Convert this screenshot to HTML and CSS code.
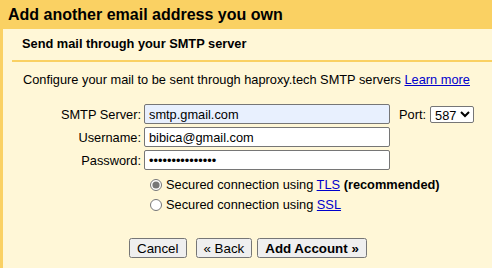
FILE: index.html
```html
<!DOCTYPE html>
<html lang="en">
<head>
  <meta charset="UTF-8" />
  <title>Add another email address you own</title>
  <link rel="stylesheet" href="styles.css">
</head>
<body>
  <div class="title-bar">Add another email address you own</div>

  <div class="panel">
    <div class="step-title">Send mail through your SMTP server</div>
    <div class="divider"></div>

    <p class="intro">Configure your mail to be sent through haproxy.tech SMTP servers <a href="#">Learn more</a></p>

    <form class="smtp-form">
      <div class="form-row">
        <label for="smtpServer">SMTP Server:</label>
        <input type="text" id="smtpServer" class="autofill" value="smtp.gmail.com">
        <label for="port" class="port-label">Port:</label>
        <select id="port">
          <option>587</option>
          <option>465</option>
        </select>
      </div>
      <div class="form-row">
        <label for="username">Username:</label>
        <input type="text" id="username" value="bibica@gmail.com">
      </div>
      <div class="form-row">
        <label for="password">Password:</label>
        <input type="password" id="password" value="passwordpasswor">
      </div>

      <div class="radio-group">
        <label class="radio-row">
          <input type="radio" name="secure" checked>Secured connection using <a href="#">TLS</a> <b>(recommended)</b>
        </label>
        <label class="radio-row">
          <input type="radio" name="secure">Secured connection using <a href="#">SSL</a>
        </label>
      </div>

      <div class="buttons">
        <button type="button" class="cancel-btn">Cancel</button>
        <button type="button" class="back-btn">&laquo; Back</button>
        <button type="submit" class="add-btn">Add Account &raquo;</button>
      </div>
    </form>
  </div>
</body>
</html>
```

FILE: styles.css
```css
body {
  margin: 0;
  font-family: "Liberation Sans", Arial, sans-serif;
  font-size: 12.8px;
  color: #000;
  background-color: #fff7d7;
}

.title-bar {
  height: 29px;
  line-height: 30px;
  padding-left: 8px;
  background-color: #fad163;
  font-size: 16px;
  font-weight: bold;
}

.panel {
  border-left: 3px solid #fad163;
  height: 239px;
  box-sizing: border-box;
}

.step-title {
  padding: 7px 0 0 19px;
  height: 24px;
  font-weight: bold;
}

.divider {
  margin-left: 9px;
  height: 2px;
  background-color: #fad163;
}

.intro {
  margin: 10px 0 0 20px;
}

a {
  color: #0000cc;
}

.smtp-form {
  margin-top: 17px;
}

.form-row {
  display: flex;
  align-items: center;
  margin-bottom: 3px;
}

.form-row label {
  width: 141px;
  text-align: right;
  padding-right: 3px;
  box-sizing: border-box;
}

.form-row input {
  width: 246px;
  height: 20px;
  box-sizing: border-box;
  padding: 1px 4px;
  border: 1px solid #767676;
  border-radius: 2px;
  font-family: inherit;
  font-size: 12.8px;
  color: #000;
  background-color: #fff;
}

.form-row input.autofill {
  background-color: #e8f0fe;
}

.form-row .port-label {
  width: auto;
  padding: 0 4px 0 9px;
}

.form-row select {
  height: 17px;
  font-family: inherit;
  font-size: 12.8px;
  padding: 0;
  border: 1px solid #767676;
  border-radius: 2px;
  background-color: #fff;
}

.radio-group {
  margin: 5px 0 0 142px;
}

.radio-row {
  display: block;
  height: 20px;
  line-height: 20px;
}

.radio-row input {
  margin: 0 4px 0 5px;
  width: 12px;
  height: 12px;
  vertical-align: -2px;
  accent-color: #767676;
}

.buttons {
  margin: 23px 0 0 126px;
  display: flex;
}

.buttons button {
  font-family: inherit;
  font-size: 13.33px;
  height: 20px;
  padding: 0 6px;
}

.back-btn {
  margin-left: 9px;
}

.add-btn {
  margin-left: 5px;
  font-weight: bold;
}
```
